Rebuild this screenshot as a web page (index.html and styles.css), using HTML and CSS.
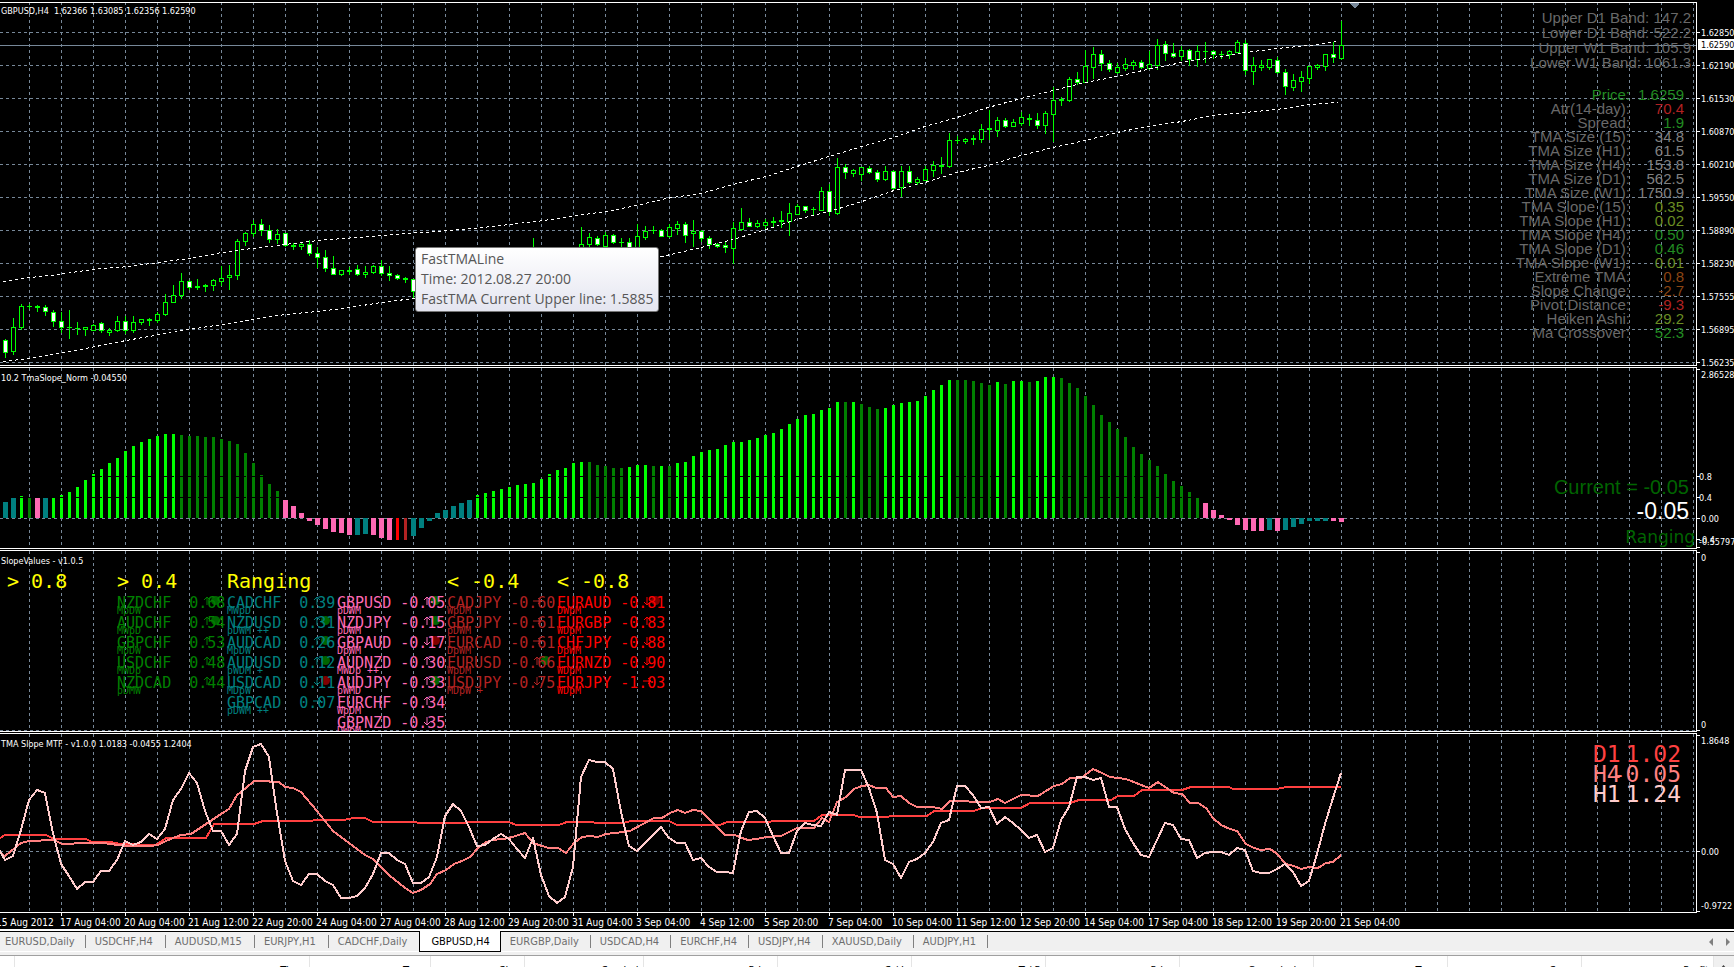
FILE: index.html
```html
<!DOCTYPE html>
<html lang="en">
<head>
<meta charset="utf-8">
<title>GBPUSD,H4</title>
<link rel="stylesheet" href="styles.css">
</head>
<body>
<main class="chart">
  <section class="pane pane-price" aria-label="Price">
    <div class="plot">
      <svg class="canvas" id="price" aria-hidden="true"></svg>
      <h1 class="pane-title">GBPUSD,H4&nbsp; 1.62366 1.63085 1.62356 1.62590</h1>
      <div class="bands">
        <span>Upper D1 Band: 147.2</span>
        <span>Lower D1 Band: 522.2</span>
        <span>Upper W1 Band: 105.9</span>
        <span>Lower W1 Band: 1061.3</span>
      </div>
      <table class="stats"><tbody id="stats"></tbody></table>
      <div class="tooltip" role="tooltip">
        <span>FastTMALine</span>
        <span>Time: 2012.08.27 20:00</span>
        <span>FastTMA Current Upper line: 1.5885</span>
      </div>
    </div>
    <svg class="axis" id="price-axis"></svg>
  </section>

  <section class="pane pane-slope" aria-label="TmaSlope">
    <div class="plot">
      <svg class="canvas" id="slope" aria-hidden="true"></svg>
      <h2 class="pane-title">10.2 TmaSlope_Norm -0.04550</h2>
      <div class="current">
        <span class="current-line">Current = -0.05</span>
        <span class="current-value">-0.05</span>
      </div>
      <span class="current-state">Ranging</span>
    </div>
    <svg class="axis" id="slope-axis"></svg>
  </section>

  <section class="pane pane-values" aria-label="SlopeValues">
    <div class="plot">
      <svg class="canvas" id="values" aria-hidden="true"></svg>
      <h2 class="pane-title">SlopeValues - v1.0.5</h2>
      <div class="groups" id="groups"></div>
    </div>
    <svg class="axis" id="values-axis"></svg>
  </section>

  <section class="pane pane-mtf" aria-label="TMA Slope MTF">
    <div class="plot">
      <svg class="canvas" id="mtf" aria-hidden="true"></svg>
      <h2 class="pane-title">TMA Slope MTF - v1.0.0 1.0183 -0.0455 1.2404</h2>
      <div class="frames">
        <div class="frame d1"><span>D1</span><span>1.02</span></div>
        <div class="frame h4"><span>H4</span><span>-0.05</span></div>
        <div class="frame h1"><span>H1</span><span>1.24</span></div>
      </div>
    </div>
    <svg class="axis" id="mtf-axis"></svg>
  </section>

  <div class="timeline" id="timeline"></div>
</main>

<nav class="tabs" aria-label="Charts">
  <button type="button">EURUSD,Daily</button>
  <button type="button">USDCHF,H4</button>
  <button type="button">AUDUSD,M15</button>
  <button type="button">EURJPY,H1</button>
  <button type="button">CADCHF,Daily</button>
  <button type="button" class="active">GBPUSD,H4</button>
  <button type="button">EURGBP,Daily</button>
  <button type="button">USDCAD,H4</button>
  <button type="button">EURCHF,H4</button>
  <button type="button">USDJPY,H4</button>
  <button type="button">XAUUSD,Daily</button>
  <button type="button">AUDJPY,H1</button>
  <span class="tab-scroll">
    <button type="button" aria-label="Scroll left"><svg width="4" height="8" viewBox="0 0 4 8"><path d="M4 0v8L0 4z"/></svg></button>
    <button type="button" aria-label="Scroll right"><svg width="4" height="8" viewBox="0 0 4 8"><path d="M0 0v8l4-4z"/></svg></button>
  </span>
</nav>

<section class="terminal" aria-label="Terminal">
  <table class="orders">
    <colgroup>
      <col class="c-mark"><col class="c-time"><col class="c-type"><col class="c-size"><col class="c-symbol"><col class="c-wide"><col class="c-wide"><col class="c-wide"><col class="c-wide"><col class="c-wide"><col class="c-wide"><col class="c-wide"><col>
    </colgroup>
    <thead><tr><th></th><th>Time</th><th>Type</th><th>Size</th><th>Symbol</th><th>Price</th><th>S / L</th><th>T / P</th><th>Price</th><th>Commission</th><th>Taxes</th><th>Swap</th><th>Profit</th></tr></thead>
  </table>
  <div class="scrollbar"><svg width="7" height="4" viewBox="0 0 7 4"><path d="M3.500 0L7 4H0z"/></svg></div>
</section>
<script src="chart.js"></script>
</body>
</html>
```

FILE: styles.css
```css
* { box-sizing: border-box; }

html, body { height: 100%; }

body {
  margin: 0;
  display: flex;
  flex-direction: column;
  overflow: hidden;
  background: #000;
  color: #fff;
  font: 9px/12px "DejaVu Sans Condensed", "DejaVu Sans", sans-serif;
}

.chart {
  flex: none;
  display: grid;
  gap: 1px;
  padding-top: 2px;
  overflow: hidden;
}

.pane {
  display: grid;
  grid-template-columns: minmax(0, 1fr) 37px;
}

.plot {
  position: relative;
  overflow: hidden;
  border: 1px solid #fff;
  border-left: 0;
}

.canvas, .axis { display: block; width: 100%; height: 100%; }

.pane-price { height: 364px; }
.pane-slope, .pane-values { height: 182px; }
.pane-mtf { height: 180px; }

.axis { overflow: visible; fill: #fff; }

.pane-title {
  position: absolute;
  top: 2px;
  left: 1px;
  margin: 0;
  font: inherit;
  white-space: nowrap;
}

.pane-slope .pane-title,
.pane-values .pane-title,
.pane-mtf .pane-title { top: 4px; }

/* Chart strokes */
.grid { stroke: #778899; stroke-dasharray: 3 3; }
.price-line { stroke: #778899; }
.marker { fill: #778899; }
.wick { stroke: #0f0; }
.body { stroke: #0f0; fill: #000; }
.body.down { fill: #fff; }
.band { fill: none; stroke: #fff; stroke-dasharray: 3 3; }
.level { stroke: #000; stroke-dasharray: 12 6; }
.line { fill: none; stroke-width: 2; stroke-linejoin: round; }
.line.d1 { stroke: #ff4040; }
.line.h4 { stroke: #ff8080; }
.line.h1 { stroke: #ffcccc; }
.tick { stroke: #fff; }
.price-tag { fill: #fff; }
.price-tag-text { fill: #000; }

/* Price overlays */
.bands {
  position: absolute;
  top: 7px;
  right: 5px;
  display: grid;
  text-align: right;
  font: 15px/15px "Liberation Sans", Arial, sans-serif;
  color: #696969;
}

.stats {
  position: absolute;
  top: 85px;
  right: 12px;
  border-collapse: collapse;
  text-align: right;
  font: 15px/14px "Liberation Sans", Arial, sans-serif;
  color: #696969;
}

.stats th { padding: 0; font-weight: normal; }
.stats td { padding: 0; width: 54px; }
.stats .gray { color: #808080; }
.stats .green { color: #228b22; }
.stats .red { color: #b22222; }
.stats .olive { color: #6b8e23; }
.stats .brown { color: #8b4513; }

.tooltip {
  position: absolute;
  top: 244px;
  left: 415px;
  display: grid;
  padding: 1px 5px 2px;
  border: 1px solid #767676;
  border-radius: 3px;
  background: linear-gradient(#fff, #e4e5f0);
  color: #575757;
  font: 14px/20px "Open Sans", "Noto Sans", sans-serif;
  white-space: nowrap;
}

/* Slope overlays */
.current {
  position: absolute;
  top: 107px;
  right: 7px;
  display: grid;
  text-align: right;
  font: 20px/24px "Liberation Sans", Arial, sans-serif;
}

.current-line { color: #006400; }
.current-value { font-size: 23px; }

.current-state {
  position: absolute;
  right: 1px;
  bottom: 0;
  font: 17px/22px "DejaVu Sans", sans-serif;
  color: #006400;
}

/* Slope value groups */
.groups {
  position: absolute;
  top: 18px;
  left: 7px;
  display: grid;
  grid-template-columns: repeat(6, 110px);
  font: 15px/20px "DejaVu Sans Mono", monospace;
}

.group h3 {
  margin: 0;
  font: 20px/24px "DejaVu Sans Mono", monospace;
  color: #ff0;
  white-space: pre;
}

.group ul { margin: 0; padding: 0; list-style: none; }
.group li { position: relative; z-index: 0; height: 20px; white-space: pre; }
.group small { position: absolute; left: 0; top: 12px; font-size: 10px; line-height: 12px; }
.group .trend { position: absolute; left: 86px; top: 3px; fill: none; stroke: currentColor; }
.group .dot { position: absolute; z-index: -1; left: 94px; top: 3px; width: 9px; height: 9px; border-radius: 50%; background: #006400; }
.group .dot.bad { background: #800000; }

.strong-up { color: #0f0; }
.up { color: #008000; }
.flat-up { color: #008080; }
.flat-down { color: #ff69b4; }
.down { color: #b22222; }
.strong-down { color: #f00; }

.frames {
  position: absolute;
  top: 10px;
  right: 15px;
  width: 88px;
  display: grid;
  font: 23px/20px "DejaVu Sans Mono", monospace;
}

.frame { display: grid; }
.frame span { grid-area: 1 / 1; }
.frame span + span { justify-self: end; }
.frame.d1 { color: #ff4040; }
.frame.h4 { color: #ff8080; }
.frame.h1 { color: #ffcccc; }

.timeline {
  display: grid;
  grid-template-columns: repeat(22, 64px);
  height: 16px;
  margin: -1px 0 0 -4px;
  font-size: 10px;
  white-space: nowrap;
}

.timeline span { position: relative; padding-top: 4px; }
.timeline span + span::before { content: ""; position: absolute; top: 0; left: 1px; width: 1px; height: 3px; background: #fff; }

/* Chart tabs */
.tabs {
  flex: none;
  display: flex;
  align-items: flex-start;
  height: 27px;
  border-top: 2px solid #fff;
  border-bottom: 1px solid #a0a0a0;
  background: linear-gradient(#000 1px, #f0f0f0 1px 20px, #fff 20px 21px, #f0f0f0 21px);
}

.tabs button {
  position: relative;
  padding: 0;
  border: 0;
  background: none;
  color: #6d6d6d;
  font: 11px/18px "DejaVu Sans Condensed", "DejaVu Sans", sans-serif;
}

.tabs > button { padding: 2px 13px 0 9px; }
.tabs > button:first-child { padding: 2px 11px 0 5px; }
.tabs > .active ~ button { padding-right: 12px; }
.tabs > button::after { content: ""; position: absolute; right: 0; top: 4px; width: 1px; height: 13px; background: #808080; }

.tabs > .active {
  margin-left: -1px;
  padding: 2px 10px 0 11px;
  border: solid #000;
  border-width: 0 1px 1px;
  background: #fff;
  color: #000;
}

.tabs > .active::after { content: none; }

.tab-scroll { display: flex; gap: 13px; margin-left: auto; padding: 7px 4px 0 0; }
.tab-scroll button { display: grid; }
.tab-scroll svg { display: block; fill: #808080; }

/* Terminal header */
.terminal {
  flex: 1;
  display: flex;
  min-height: 0;
  overflow: hidden;
  background: #fff;
  color: #000;
}

.orders { flex: 1; table-layout: fixed; border-collapse: collapse; height: 24px; }
.orders th {
  padding: 5px 4px 0 0;
  border-right: 1px solid #e5e5e5;
  text-align: right;
  font: 11px/16px "DejaVu Sans Condensed", "DejaVu Sans", sans-serif;
}

.c-mark { width: 14px; }
.c-time { width: 295px; }
.c-type { width: 121px; }
.c-size { width: 94px; }
.c-symbol { width: 119px; }
.c-wide { width: 134px; }

.scrollbar { width: 20px; padding: 4px 6px; background: #f0f0f0; fill: #404040; }
```

FILE: chart.js
```js
const NS = 'http://www.w3.org/2000/svg';
const FAR = 4000;

function add(parent, name, attrs, text) {
  const node = document.createElementNS(NS, name);
  for (const key in attrs) node.setAttribute(key, attrs[key]);
  if (text !== undefined) node.textContent = text;
  parent.appendChild(node);
  return node;
}

/* Each pane keeps window coordinates; origin is the y of its first row. */
function layer(id, origin) {
  return add(document.getElementById(id), 'g', {
    transform: 'translate(0,' + -origin + ')', 'shape-rendering': 'crispEdges'
  });
}

function grid(g, top, bottom, rows) {
  const width = g.ownerSVGElement.clientWidth;
  for (let x = 29.5; x < width; x += 32) add(g, 'line', { class: 'grid', x1: x, x2: x, y1: top, y2: bottom });
  rows.forEach(y => add(g, 'line', { class: 'grid', x1: 0, x2: FAR, y1: y + 0.5, y2: y + 0.5 }));
}

/* Labels: [tick y, text, text x, text centre y] */
function axis(id, origin, labels) {
  const g = layer(id, origin);
  labels.forEach(([y, text, x = 4, middle = y]) => {
    add(g, 'line', { class: 'tick', x1: 0, x2: 3, y1: y + 0.5, y2: y + 0.5 });
    add(g, 'text', { x, y: middle + 4 }, text);
  });
  return g;
}

/* Price */
const candles = `339,340,352,357,1 318,327,351,354 304,306,327,329 304,306,306,308 305,306,307,311 305,307,311,315,1
310,312,321,326,1 312,321,327,332,1 310,327,327,338 322,328,328,334 327,327,329,335 324,325,330,330 322,323,330,332,1
328,330,332,335 316,321,330,331 316,321,330,333,1 316,322,330,332 319,319,322,324 318,319,320,325 312,314,320,322
294,302,314,315 285,295,302,302 273,281,295,298 280,281,287,289,1 279,286,287,289 284,285,286,291 279,280,285,290
266,278,281,285 265,275,277,289 239,241,275,279 232,233,241,245 220,224,233,236 219,224,230,235,1 225,230,239,242,1
229,234,239,243 233,233,245,246,1 243,245,246,249 242,244,246,249 240,244,253,255,1 247,253,257,267,1 250,257,268,271,1
256,268,274,274,1 270,270,274,275 267,270,271,274 265,269,274,275,1 266,272,274,277 265,266,272,273 260,266,273,275,1
266,273,275,280,1 274,275,278,279,1 277,278,279,282 279,279,291,297,1
- - - - - - - - - - - - - - 238,250,256,260 - - - - -
227,244,250,252 233,237,244,250 236,238,244,245,1 232,235,246,246 234,235,242,243,1 238,242,242,247 238,242,248,250,1
224,236,250,252 226,231,237,239 226,230,230,233 229,230,236,236,1 224,227,236,237 221,224,228,234 222,224,235,242,1
220,231,233,246 230,231,238,241,1 236,238,244,248,1 243,244,246,247,1 241,245,247,252,1 222,228,248,263 208,222,229,230
218,222,226,226,1 220,223,226,227 219,222,225,229 217,221,222,227 211,220,221,227 203,213,221,235 204,206,214,214
206,206,210,212,1 207,209,209,214 187,191,210,210 184,191,211,215,1 158,167,213,214 164,167,172,178,1 169,170,173,176
167,167,174,180 166,168,172,173,1 170,172,179,181,1 166,171,179,180 170,171,188,190,1 166,171,187,196 166,171,182,183,1
177,179,182,184 166,169,180,180 161,165,170,176 157,165,166,173 133,140,166,167 136,140,140,143 138,139,141,143
135,138,139,144 124,129,139,142 110,128,129,139 117,120,130,136 118,120,126,127,1 119,122,126,126 112,117,123,125
114,118,119,125 113,120,125,128,1 111,113,125,133 87,100,114,141 97,99,100,105 77,79,100,101 72,79,82,84,1
50,66,82,82 47,54,67,78 50,54,63,70,1 60,63,69,71,1 63,67,72,73 58,64,68,70 60,62,65,69 60,62,67,68,1 51,64,68,69
39,45,65,69 41,44,53,60,1 43,53,56,57,1 46,50,56,60 49,50,59,65,1 45,51,59,66 42,51,51,62 50,51,54,58,1 51,54,54,58
50,51,54,58 40,42,52,52 40,43,70,74,1 57,65,71,84 60,65,67,70 59,59,67,69 57,60,72,73,1 69,72,86,94,1 74,80,87,90
71,77,81,91 66,66,78,83 64,65,67,69 54,54,66,70 42,54,57,62,1 21,45,58,59`.split(/\s+/);

const upperBand = '3,281 30,277 59,274 92,269 129,266 166,261 189,258 222,252 252,248 285,244 318,240 370,236 407,233 451,230 492,226 544,220 577,215 606,211 637,205 666,198 701,193 733,184 766,176 797,166 829,156 862,146 894,137 925,126 957,117 988,107 1021,98 1053,90 1085,82 1117,76 1147,69 1182,62 1213,57 1245,52 1277,48 1310,45 1338,41';
const lowerBand = '3,361 29,358 75,350 96,346 126,340 189,329 222,324 253,319 285,314 318,311 350,307 381,302 414,298 540,277 662,256 701,247 733,239 766,229 797,219 829,211 862,201 894,190 925,182 957,172 988,165 1021,155 1053,147 1085,140 1117,132 1147,126 1182,121 1213,115 1245,112 1277,109 1310,104 1338,102';

const price = layer('price', 3);
const priceLabels = ['1.62850', '1.62190', '1.61530', '1.60870', '1.60210', '1.59550', '1.58890', '1.58230', '1.57555', '1.56895', '1.56235'];
const priceRows = priceLabels.map((_, i) => 32 + 33 * i);
grid(price, 2, 365, priceRows);
add(price, 'line', { class: 'price-line', x1: 0, x2: FAR, y1: 45.5, y2: 45.5 });
add(price, 'path', { class: 'marker', d: 'M1350 3h9v1l-4 4h-1l-4-4z' });
candles.forEach((row, i) => {
  if (row === '-') return;
  const [high, top, bottom, low, down] = row.split(',').map(Number);
  const x = 5.5 + 8 * i;
  add(price, 'line', { class: 'wick', x1: x, x2: x, y1: high, y2: low + 1 });
  if (bottom > top) add(price, 'rect', { class: down ? 'body down' : 'body', x: x - 2, y: top + 0.5, width: 4, height: bottom - top });
  else add(price, 'line', { class: 'wick', x1: x - 2.5, x2: x + 2.5, y1: top + 0.5, y2: top + 0.5 });
});
[upperBand, lowerBand].forEach(points => add(price, 'polyline', { class: 'band', points, transform: 'translate(0,0.5)' }));

const priceAxis = axis('price-axis', 2, priceLabels.map((text, i) => [priceRows[i], text]));
add(priceAxis, 'rect', { class: 'price-tag', x: 1, y: 39, width: 36, height: 11 });
add(priceAxis, 'text', { class: 'price-tag-text', x: 4, y: 48 }, '1.62590');

const stats = [
  ['Price:', '1.6259', 'green', 'green'], ['Atr(14-day):', '70.4', 'red'], ['Spread:', '1.9', 'green'],
  ['TMA Size (15):', '34.8', 'gray'], ['TMA Size (H1):', '61.5', 'gray'], ['TMA Size (H4):', '153.8', 'gray'],
  ['TMA Size (D1):', '562.5', 'gray'], ['TMA Size (W1):', '1750.9', 'gray'],
  ['TMA Slope (15):', '0.35', 'olive'], ['TMA Slope (H1):', '0.02', 'olive'], ['TMA Slope (H4):', '0.50', 'green'],
  ['TMA Slope (D1):', '0.46', 'green'], ['TMA Slope (W1):', '0.01', 'olive'],
  ['Extreme TMA:', '0.8', 'brown'], ['Slope Change:', '-2.7', 'brown'], ['Pivot Distance:', '-9.3', 'red'],
  ['Heiken Ashi:', '29.2', 'olive'], ['Ma Crossover:', '52.3', 'green']
];
document.getElementById('stats').innerHTML = stats.map(([label, value, tone, labelTone = '']) =>
  `<tr><th scope="row" class="${labelTone}">${label}</th><td class="${tone}">${value}</td></tr>`).join('');

/* Slope histogram */
const heights = [16,20,22,20,20,20,20,23,26,31,38,44,49,55,60,67,72,76,79,82,84,84,83,82,82,81,81,79,77,74,65,55,43,34,27,18,12,5,-3,-7,-11,-14,-15,-17,-17,-16,-17,-20,-22,-22,-22,-18,-10,-3,5,8,12,15,18,23,25,27,29,31,33,34,35,39,44,48,50,55,56,56,53,52,50,50,51,53,53,52,52,52,55,56,62,
  66,68,69,73,76,76,78,80,83,85,89,94,99,103,104,108,110,116,116,116,114,111,109,110,113,115,116,117,122,128,133,138,138,138,137,135,133,136,134,137,137,136,137,141,141,140,135,130,122,113,103,96,89,81,71,64,58,52,44,37,32,26,21,15,8,3,-2,-7,-12,-13,-13,-12,-13,-12,-9,-6,-3,-3,-3,-3,-4];
const palette = { t: '#008080', p: '#ff69b4', L: '#00ff00', g: '#008000', r: '#ff0000', b: '#b22222' };
const tones = 't2 L1 g1 p1 t1 L16 g13 p9 t2 p3 r1 b1 t8 L14 g5 L3 g1 L1 g1 L21 g1 L1 g3 L9 g5 L1 g1 L2 g1 L3 g18 p8 t1 p1 t6 p2'
  .split(' ').map(run => run[0].repeat(Number(run.slice(1)))).join('');

const slope = layer('slope', 368);
grid(slope, 368, 548, [518]);
heights.forEach((h, i) => {
  const tone = tones[i];
  const w = 'tp'.includes(tone) ? 5 : 3;
  add(slope, 'rect', { fill: palette[tone], x: 5.5 + 8 * i - w / 2, y: h > 0 ? 518 - h : 518, width: w, height: Math.abs(h) });
});
[476, 497].forEach(y => add(slope, 'line', { class: 'level', x1: 0, x2: FAR, y1: y + 0.5, y2: y + 0.5 }));
axis('slope-axis', 367, [[369, '2.86528', 4, 374], [476, '0.8', 2], [497, '0.4', 2], [518, '0.00'], [539, '-0.4', 2], [547, '-0.55797', 2, 541]]);

/* Slope values */
const groups = [
  ['> 0.8', 'strong-up', []],
  ['> 0.4', 'up', ['NZDCHF  0.68|MpDW|ug', 'AUDCHF  0.54|MWpD|ug', 'GBPCHF  0.53|MpDW|u', 'USDCHF  0.48|MWDp|u', 'NZDCAD  0.44|pDMW|u']],
  ['Ranging', 'flat-up', ['CADCHF  0.39|MWpD|u', 'NZDUSD  0.31|pDWM ++|ug', 'AUDCAD  0.26|MpDW|ug', 'AUDUSD  0.12|pWDM +|ug', 'USDCAD  0.11|MDpW|db', 'GBPCAD  0.07|pDWM ++|r']],
  ['', 'flat-down', ['GBPUSD -0.05|pDWM|ug', 'NZDJPY -0.15|pDWM|ug', 'GBPAUD -0.17|DpWM|db', 'AUDNZD -0.30|MWDp ++|u', 'AUDJPY -0.33|pWMD|ug', 'EURCHF -0.34|WpDM|u', 'GBPNZD -0.35|DWpM|d']],
  ['< -0.4', 'down', ['CADJPY -0.60|WpDM|r', 'GBPJPY -0.61|pDWM|r', 'EURCAD -0.61|DpWM|r', 'EURUSD -0.66|WpDM|ug', 'USDJPY -0.75|MDpW +|d']],
  ['< -0.8', 'strong-down', ['EURAUD -0.81|DWpM|db', 'EURGBP -0.83|WDpM|u', 'CHFJPY -0.88|DpWM|d', 'EURNZD -0.90|WDpM|d', 'EURJPY -1.03|WDpM|r']]
];
const arrows = { u: 'M4 9V1M1 4l3-3 3 3', d: 'M4 1v8M1 6l3 3 3-3', r: 'M0 5h8M5 2l3 3-3 3' };
document.getElementById('groups').innerHTML = groups.map(([title, tone, rows]) => {
  const items = rows.map(row => {
    const [text, frames, marks] = row.split('|');
    const dot = marks[1] ? `<i class="dot${marks[1] === 'b' ? ' bad' : ''}"></i>` : '';
    return `<li>${dot}${text}<small>${frames}</small><svg class="trend" width="9" height="10" aria-hidden="true"><path d="${arrows[marks[0]]}"/></svg></li>`;
  }).join('');
  return `<section class="group ${tone}"><h3>${title.replace('<', '&lt;') || ' '}</h3><ul>${items}</ul></section>`;
}).join('');

grid(layer('values', 551), 551, 731, [730]);
axis('values-axis', 550, [[552, '0', 4, 557], [730, '0', 4, 724]]);

/* Multi-timeframe slope */
const h1 = [860,856,830,800,790,793,833,864,876,889,882,882,871,871,860,841,845,842,834,839,829,800,789,773,783,811,831,831,845,834,771,747,744,757,813,861,881,885,874,874,881,885,898,898,896,888,874,853,853,860,864,883,883,877,857,816,804,811,827,846,845,839,834,839,849,858,838,875,896,903,897,867,777,760,762,762,769,812,846,851,843,835,827,838,843,843,860,858,867,872,872,873,831,812,811,818,836,853,853,831,823,825,826,812,815,770,770,770,788,813,860,864,878,862,859,853,842,823,820,786,786,795,808,807,824,817,823,830,838,835,852,848,820,807,777,777,780,778,807,807,829,843,855,857,840,823,825,839,840,858,853,852,852,855,848,850,871,873,873,869,864,872,886,881,854,824,798,773];
const h4 = '0,853 5,856 21,843 29,841 54,840 62,844 86,843 103,843 126,846 150,846 158,845 166,841 173,838 181,835 191,834 212,820 221,814 229,809 237,795 246,788 254,781 267,781 272,782 279,782 285,787 293,788 301,792 317,811 333,831 349,843 365,855 373,859 389,875 405,888 413,893 421,890 430,884 437,874 446,870 454,864 462,861 470,857 478,848 486,842 493,840 502,839 509,838 525,833 533,843 542,846 549,848 558,848 566,853 574,843 582,837 590,836 598,837 606,834 615,833 630,831 654,818 662,818 670,813 678,810 685,813 693,810 701,811 725,835 735,835 742,838 748,840 757,839 766,837 781,836 797,828 814,828 822,818 829,822 837,802 846,797 854,789 862,786 869,785 876,788 886,788 893,797 901,796 909,803 917,807 933,807 942,809 950,801 963,801 974,802 990,802 998,799 1005,803 1021,795 1038,796 1054,786 1062,784 1070,778 1081,778 1093,769 1102,773 1110,777 1126,779 1149,788 1158,782 1174,793 1182,794 1190,803 1198,803 1206,808 1213,818 1221,825 1230,829 1237,831 1246,844 1254,848 1261,850 1270,849 1276,853 1286,864 1294,866 1301,869 1309,867 1318,868 1326,863 1333,862 1341,855';
const d1 = '0,838 5,835 46,835 54,839 86,839 92,842 110,842 121,844 156,845 166,838 206,838 214,824 254,824 263,821 309,821 317,820 344,820 353,818 365,818 373,822 413,822 421,823 462,823 471,822 509,822 516,825 559,825 567,822 589,822 598,823 623,823 631,821 669,821 677,825 720,825 727,822 767,822 775,821 814,821 822,815 853,815 860,817 885,817 893,816 927,816 934,811 974,811 982,808 1021,808 1030,803 1070,803 1079,800 1111,800 1118,796 1134,796 1142,790 1182,790 1191,787 1229,787 1233,789 1277,789 1286,787 1341,787';

const mtf = layer('mtf', 734);
grid(mtf, 734, 912, [851]);
add(mtf, 'polyline', { class: 'line d1', points: d1 });
add(mtf, 'polyline', { class: 'line h4', points: h4 });
add(mtf, 'polyline', { class: 'line h1', points: '-3,846 ' + h1.map((y, i) => (5 + 8 * i) + ',' + y).join(' ') });
axis('mtf-axis', 733, [[735, '1.8648', 4, 740], [851, '0.00'], [911, '-0.9722', 4, 905]]);

document.getElementById('timeline').innerHTML = ['15 Aug 2012', '17 Aug 04:00', '20 Aug 04:00', '21 Aug 12:00', '22 Aug 20:00', '24 Aug 04:00', '27 Aug 04:00', '28 Aug 12:00', '29 Aug 20:00', '31 Aug 04:00', '3 Sep 04:00', '4 Sep 12:00', '5 Sep 20:00', '7 Sep 04:00', '10 Sep 04:00', '11 Sep 12:00', '12 Sep 20:00', '14 Sep 04:00', '17 Sep 04:00', '18 Sep 12:00', '19 Sep 20:00', '21 Sep 04:00']
  .map(text => `<span>${text}</span>`).join('');
```
